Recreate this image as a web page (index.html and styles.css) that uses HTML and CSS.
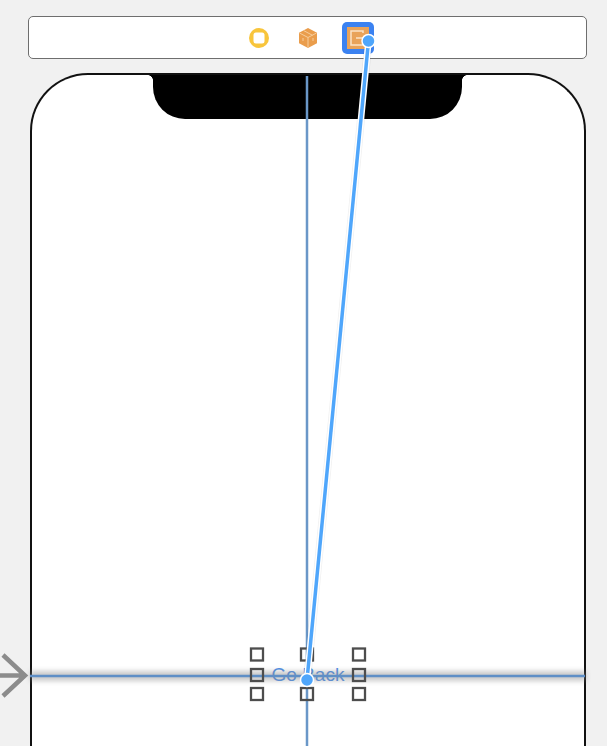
FILE: index.html
```html
<!DOCTYPE html>
<html>
<head>
    <meta charset="utf-8" />
    <title>Storyboard</title>
    <link rel="stylesheet" href="styles.css">
</head>
<body>
    <div class="scene-dock">
        <svg class="dock-icon" width="24" height="24" viewBox="0 0 24 24">
            <circle cx="12" cy="12" r="10" fill="#f8c53c" />
            <rect x="6.500" y="6.500" width="11" height="11" rx="2.500" fill="#fff" />
        </svg>
        <svg class="dock-icon" width="24" height="24" viewBox="0 0 24 24">
            <path d="M12 2l9 4.800v10.400L12 22l-9-4.800V6.800z" fill="#ea9d4c" />
            <path d="M3.500 7L12 11.500 20.500 7M12 11.500V21.500M7.500 4.500l9 4.800M7 12v3M17 12v3" fill="none" stroke="#f6cd9c" stroke-width="1" />
        </svg>
        <div class="dock-selected">
            <svg width="22" height="22" viewBox="0 0 22 22">
                <rect width="22" height="22" fill="#e9a35a" />
                <path d="M16 6V4H4v14h12v-2M9 11h10" fill="none" stroke="#fbe3c6" stroke-width="1.500" />
            </svg>
        </div>
    </div>

    <div class="device">
        <div class="notch"></div>
        <a class="back-btn">Go Back</a>
    </div>

    <svg class="overlay" width="607" height="746" viewBox="0 0 607 746">
        <defs>
            <filter id="soft" x="-5%" y="-500%" width="110%" height="1100%">
                <feGaussianBlur stdDeviation="2.500" />
            </filter>
            <filter id="crisp" x="-5%" y="-5%" width="110%" height="110%">
                <feGaussianBlur stdDeviation="0.400" />
            </filter>
        </defs>

        <!-- constraint guides -->
        <rect x="30" y="671" width="556" height="10" fill="#8a8a8a" opacity="0.45" filter="url(#soft)" />
        <path d="M30 676H585" stroke="#5f8fc6" stroke-width="2.500" />
        <path d="M307 76V746" stroke="#6a97c8" stroke-width="2.500" />

        <!-- entry arrow -->
        <path d="M0 675.500H24M3 655l22 20.500L3 696" fill="none" stroke="#8c8c8c" stroke-width="4.500" />

        <!-- selection handles -->
        <g fill="none" stroke="#4e4e4e" stroke-width="2.300" filter="url(#crisp)">
            <rect x="251" y="648.500" width="12" height="12" />
            <rect x="301" y="648.500" width="12" height="12" />
            <rect x="353" y="648.500" width="12" height="12" />
            <rect x="251" y="669" width="12" height="12" />
            <rect x="353" y="669" width="12" height="12" />
            <rect x="251" y="688" width="12" height="12" />
            <rect x="301" y="688" width="12" height="12" />
            <rect x="353" y="688" width="12" height="12" />
        </g>

        <!-- segue being dragged -->
        <path d="M368.500 41L307 680" stroke="#000" stroke-opacity="0.06" stroke-width="8" />
        <path d="M368.500 41L307 680" stroke="#fff" stroke-width="6.500" />
        <path d="M368.500 41L307 680" stroke="#4fa6fb" stroke-width="3.500" />
        <circle cx="368.500" cy="41" r="6.500" fill="#4fa6fb" stroke="#fff" stroke-width="1.500" />
        <circle cx="307" cy="680" r="6.500" fill="#4fa6fb" stroke="#fff" stroke-width="1.500" />
    </svg>
</body>
</html>
```

FILE: styles.css
```css
html, body {
    height: 746px;
    overflow: hidden;
}
body {
    margin: 0;
    padding: 16px 20px 0 28px;
    box-sizing: border-box;
    background: #f1f1f1;
    font-family: "Liberation Sans", Arial, sans-serif;
}
.scene-dock {
    display: flex;
    align-items: center;
    justify-content: center;
    gap: 25px;
    width: 559px;
    height: 43px;
    padding-left: 6px;
    box-sizing: border-box;
    background: #fff;
    border: 1px solid #6e6e6e;
    border-radius: 5px;
}
.dock-icon {
    flex: none;
}
.dock-selected {
    display: flex;
    align-items: center;
    justify-content: center;
    width: 32px;
    height: 32px;
    margin-left: -3px;
    border-radius: 5px;
    background: #3b82f1;
}
.device {
    display: flex;
    flex-direction: column;
    align-items: center;
    width: 556px;
    height: 673px;
    margin: 14px 0 0 2px;
    box-sizing: border-box;
    background: #fff;
    border: 2px solid #111;
    border-bottom: none;
    border-radius: 58px 58px 0 0;
}
.notch {
    position: relative;
    width: 309px;
    height: 44px;
    flex: none;
    margin-right: 2px;
    background: #000;
    border-radius: 0 0 32px 32px;
}
.notch::before,
.notch::after {
    content: "";
    position: absolute;
    top: 0;
    width: 5px;
    height: 5px;
}
.notch::before {
    left: -5px;
    background: radial-gradient(circle at 0 100%, transparent 4.500px, #000 5px);
}
.notch::after {
    right: -5px;
    background: radial-gradient(circle at 100% 100%, transparent 4.500px, #000 5px);
}
.back-btn {
    margin-top: 544px;
    font-size: 19px;
    line-height: 24px;
    color: #4f8fe6;
}
.overlay {
    position: absolute;
    left: 0;
    top: 0;
}
```
